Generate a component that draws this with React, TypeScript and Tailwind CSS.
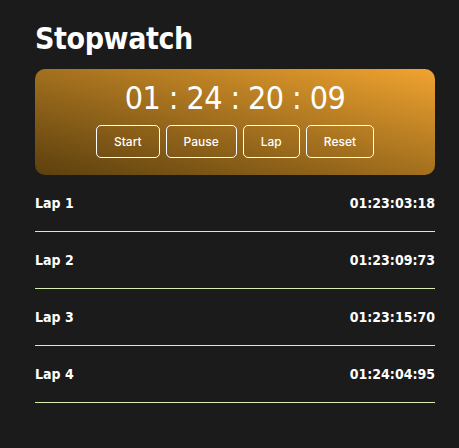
const laps = [
  { name: "Lap 1", time: "01:23:03:18" },
  { name: "Lap 2", time: "01:23:09:73" },
  { name: "Lap 3", time: "01:23:15:70" },
  { name: "Lap 4", time: "01:24:04:95" },
];

const buttons = ["Start", "Pause", "Lap", "Reset"];

export default function App() {
  return (
    <div
      className="min-h-[448px] w-full bg-[#1b1b1b] px-[35px] pt-[19px] text-white"
      style={{ fontFamily: '"DejaVu Sans Condensed", "DejaVu Sans", sans-serif' }}
    >
      <h1 className="text-[30px] font-bold leading-[40px] tracking-[-0.4px]">Stopwatch</h1>

      {/* 타이머 카드 */}
      <div className="mt-[10px] flex h-[106px] w-[400px] flex-col items-center rounded-[10px] bg-gradient-to-tr from-[#5c400e] to-[#f1a430] pt-[9px]">
        <div className="text-[32px] leading-[40px] tracking-[-0.6px]">01 : 24 : 20 : 09</div>
        <div className="mt-[7px] flex gap-[6px]">
          {buttons.map((b) => (
            <button
              key={b}
              className="h-[33px] rounded-[5px] border border-white px-[17px] text-[12px] font-medium"
              style={{ fontFamily: '"Inter", "Liberation Sans", sans-serif' }}
            >
              {b}
            </button>
          ))}
        </div>
      </div>

      {/* 랩 목록 */}
      <div className="w-[400px]">
        {laps.map((l) => (
          <div
            key={l.name}
            className="flex h-[57px] items-center justify-between border-b border-[#d8eeb0] text-[14px] font-bold"
          >
            <span>{l.name}</span>
            <span>{l.time}</span>
          </div>
        ))}
      </div>
    </div>
  );
}
